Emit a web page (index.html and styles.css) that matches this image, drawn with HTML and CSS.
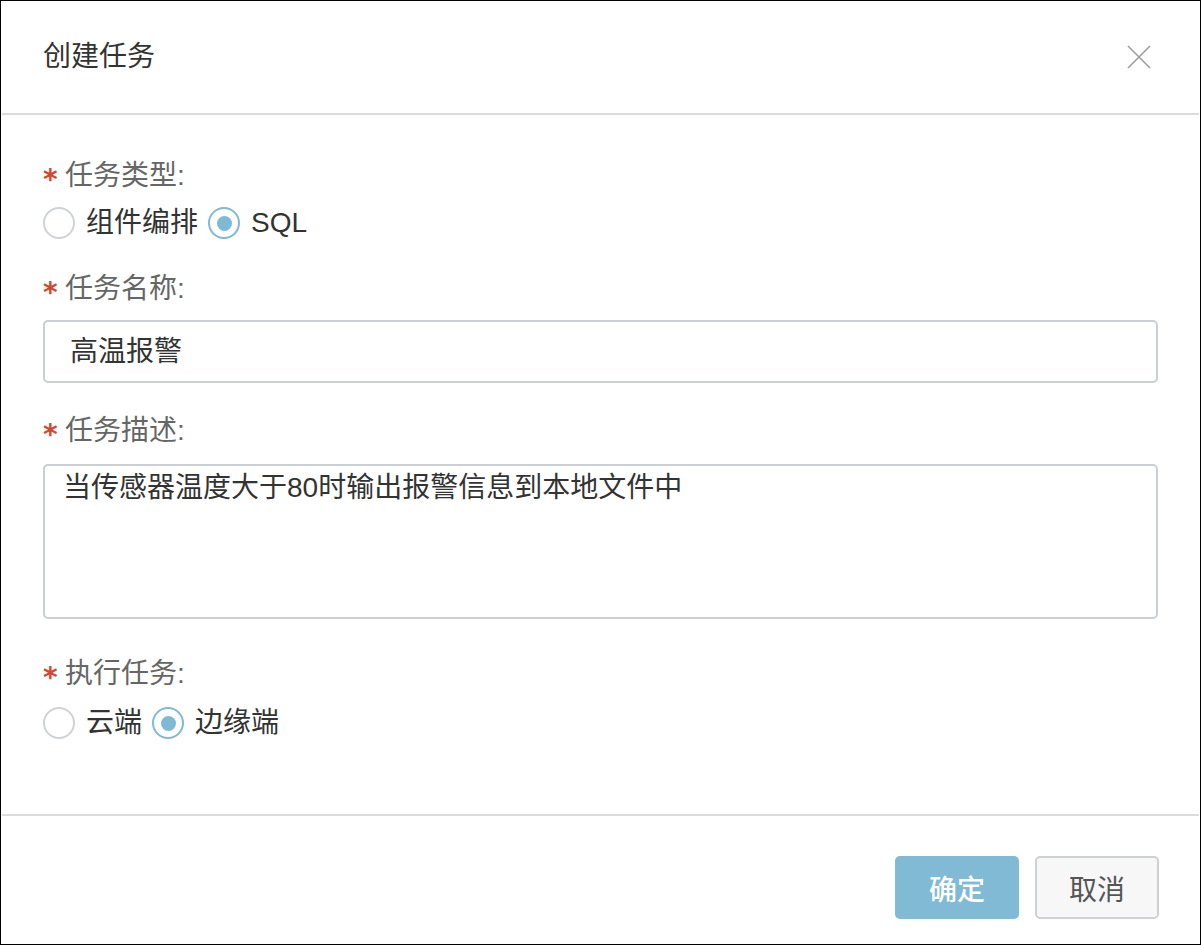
FILE: index.html
```html
<!DOCTYPE html>
<html lang="zh-CN">
<head>
<meta charset="utf-8">
<title>创建任务</title>
<link rel="stylesheet" href="styles.css">
</head>
<body>
<div class="dialog">
  <div class="dialog-header">
    <div class="dialog-title">创建任务</div>
    <button class="close-btn" aria-label="关闭">
      <svg width="24" height="24" viewBox="0 0 24 24"><path d="M1 1 L23 23 M23 1 L1 23" stroke="#9e9e9e" stroke-width="1.6" fill="none"/></svg>
    </button>
  </div>
  <div class="dialog-body">
    <div class="form-item item-type">
      <div class="form-label"><span class="req">*</span><span>任务类型:</span></div>
      <div class="radio-group">
        <label class="radio"><span class="radio-circle"></span><span class="radio-text">组件编排</span></label>
        <label class="radio checked"><span class="radio-circle"></span><span class="radio-text">SQL</span></label>
      </div>
    </div>
    <div class="form-item item-name">
      <div class="form-label"><span class="req">*</span><span>任务名称:</span></div>
      <div class="input">高温报警</div>
    </div>
    <div class="form-item item-desc">
      <div class="form-label"><span class="req">*</span><span>任务描述:</span></div>
      <div class="textarea">当传感器温度大于80时输出报警信息到本地文件中</div>
    </div>
    <div class="form-item item-exec">
      <div class="form-label"><span class="req">*</span><span>执行任务:</span></div>
      <div class="radio-group">
        <label class="radio"><span class="radio-circle"></span><span class="radio-text">云端</span></label>
        <label class="radio checked"><span class="radio-circle"></span><span class="radio-text">边缘端</span></label>
      </div>
    </div>
  </div>
  <div class="dialog-footer">
    <button class="btn btn-primary">确定</button>
    <button class="btn btn-default">取消</button>
  </div>
</div>
</body>
</html>
```

FILE: styles.css
```css
* { box-sizing: border-box; }
html, body { margin: 0; padding: 0; background: #fff; }
body {
  font-family: "Liberation Sans", "Noto Sans CJK SC", sans-serif;
  font-size: 28px;
  color: #333;
}
.dialog {
  width: 1201px;
  height: 945px;
  border: 1px solid #000;
  display: flex;
  flex-direction: column;
  background: #fff;
}
.dialog-header {
  height: 114px;
  margin: 0 1px;
  border-bottom: 2px solid #dcdcdc;
  display: flex;
  align-items: center;
  justify-content: space-between;
  padding: 0 48px 0 41px;
}
.dialog-title {
  font-size: 28px;
  line-height: 40px;
  color: #333;
}
.close-btn {
  border: 0;
  background: none;
  padding: 0;
  width: 24px;
  height: 24px;
  display: flex;
  cursor: pointer;
}
.dialog-body {
  height: 701px;
  margin: 0 1px;
  border-bottom: 2px solid #dcdcdc;
  padding: 41px 41px 0 41px;
}
.form-label {
  display: flex;
  align-items: center;
  height: 40px;
  line-height: 40px;
  color: #666;
}
.req {
  color: #d4472f;
  font-family: "DejaVu Sans", sans-serif;
  font-weight: bold;
  font-size: 28px;
  line-height: 40px;
  width: 22px;
  flex: none;
  position: relative;
  top: 4px;
}
.item-type .form-label { margin-bottom: 7px; }
.item-name { margin-top: 26px; }
.item-name .form-label { margin-bottom: 11px; }
.item-desc { margin-top: 28px; }
.item-desc .form-label { margin-bottom: 13px; }
.item-exec { margin-top: 35px; }
.item-exec .form-label { margin-bottom: 9px; }
.radio-group {
  display: flex;
  gap: 10px;
  height: 40px;
  align-items: center;
}
.radio {
  display: flex;
  align-items: center;
  gap: 11px;
  color: #333;
  line-height: 40px;
}
.radio-circle {
  width: 32px;
  height: 32px;
  border-radius: 50%;
  border: 2px solid #cfd2d6;
  background: #fff;
  display: flex;
  align-items: center;
  justify-content: center;
}
.radio.checked .radio-circle { border-color: #7fbad4; }
.radio.checked .radio-circle::after {
  content: "";
  width: 15px;
  height: 15px;
  border-radius: 50%;
  background: #7fbad4;
}
.input {
  height: 63px;
  border: 2px solid #cbcfd3;
  border-radius: 5px;
  padding: 0 25px;
  line-height: 59px;
  color: #333;
}
.textarea {
  height: 155px;
  border: 2px solid #cbcfd3;
  border-radius: 5px;
  padding: 4px 18px;
  line-height: 36px;
  color: #333;
}
.dialog-footer {
  flex: 1;
  display: flex;
  justify-content: flex-end;
  align-items: flex-start;
  gap: 16px;
  padding: 40px 41px 0 0;
}
.btn {
  width: 124px;
  height: 63px;
  border-radius: 5px;
  font-family: "Liberation Sans", "Noto Sans CJK SC", sans-serif;
  font-size: 28px;
  cursor: pointer;
}
.btn-primary {
  background: #80bad4;
  border: 0;
  color: #fff;
  font-weight: 500;
}
.btn-default {
  background: #f7f7f8;
  border: 2px solid #cdd0d4;
  color: #555;
}
```
